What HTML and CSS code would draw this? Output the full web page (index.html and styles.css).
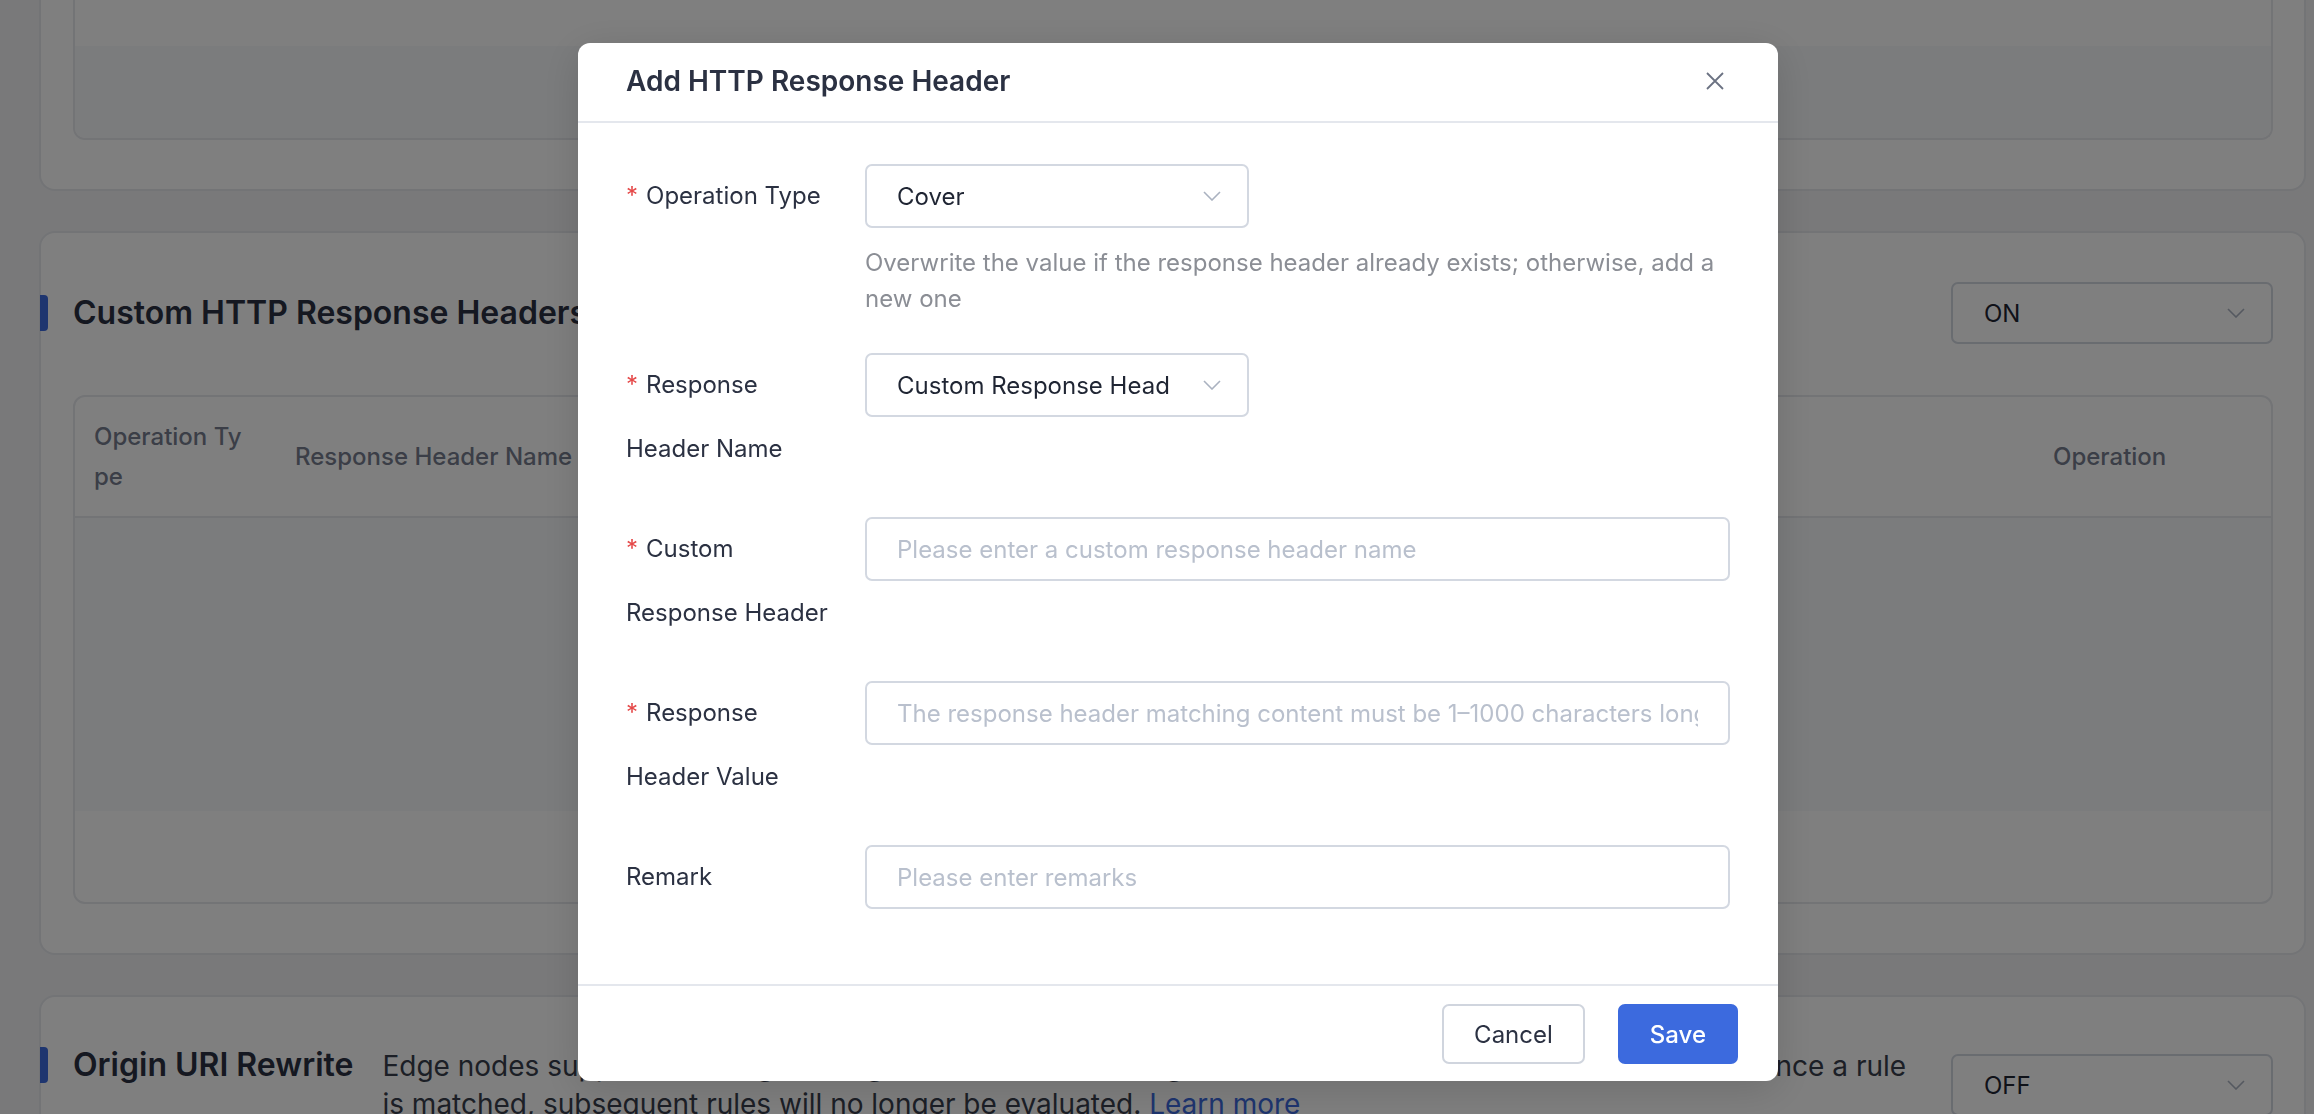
FILE: index.html
```html
<!DOCTYPE html>
<html lang="en">
<head>
<meta charset="utf-8">
<title>Response Header Settings</title>
<link rel="stylesheet" href="styles.css">
</head>
<body>
<main class="page">
  <!-- previous section, scrolled partly out of view -->
  <section class="card card-prev">
    <div class="table-box table-box-cut">
      <div class="prev-row"></div>
      <div class="empty-zone prev-empty"></div>
    </div>
  </section>

  <section class="card">
    <div class="card-head">
      <h2 class="card-title">Custom HTTP Response Headers</h2>
      <div class="select select-wide">
        <span class="select-value">ON</span>
        <svg class="select-arrow" viewBox="0 0 18 10" aria-hidden="true"><polyline points="1,1 9,9 17,1"/></svg>
      </div>
    </div>
    <div class="table-box">
      <div class="thead">
        <div class="th th-type">Operation Type</div>
        <div class="th">Response Header Name</div>
        <div class="th">Response Header Value</div>
        <div class="th">Remark</div>
        <div class="th">Operation</div>
      </div>
      <div class="empty-zone"></div>
      <div class="tfoot"></div>
    </div>
  </section>

  <section class="card">
    <div class="card-head card-head-top">
      <h2 class="card-title">Origin URI Rewrite</h2>
      <p class="card-desc">Edge nodes support rewriting the origin URI based on configured rules. Rules are matched in order, and once a rule is matched, subsequent rules will no longer be evaluated. <a class="link" href="#">Learn more</a></p>
      <div class="select select-wide select-offset">
        <span class="select-value">OFF</span>
        <svg class="select-arrow" viewBox="0 0 18 10" aria-hidden="true"><polyline points="1,1 9,9 17,1"/></svg>
      </div>
    </div>
  </section>
</main>

<div class="mask">
  <div class="dialog" role="dialog" aria-labelledby="dlg-title">
    <header class="dialog-head">
      <h3 class="dialog-title" id="dlg-title">Add HTTP Response Header</h3>
      <button class="dialog-close" type="button" aria-label="Close">
        <svg viewBox="0 0 18 18" aria-hidden="true"><path d="M1 1L17 17M17 1L1 17"/></svg>
      </button>
    </header>

    <form class="dialog-body">
      <div class="form-row">
        <label class="form-label"><span class="req">*</span>Operation Type</label>
        <div class="form-control">
          <div class="select select-narrow">
            <span class="select-value">Cover</span>
            <svg class="select-arrow" viewBox="0 0 18 10" aria-hidden="true"><polyline points="1,1 9,9 17,1"/></svg>
          </div>
          <p class="form-help">Overwrite the value if the response header already exists; otherwise, add a new one</p>
        </div>
      </div>

      <div class="form-row">
        <label class="form-label"><span class="req">*</span>Response Header Name</label>
        <div class="form-control">
          <div class="select select-narrow">
            <span class="select-value">Custom Response Header</span>
            <svg class="select-arrow select-arrow-tight" viewBox="0 0 18 10" aria-hidden="true"><polyline points="1,1 9,9 17,1"/></svg>
          </div>
        </div>
      </div>

      <div class="form-row">
        <label class="form-label"><span class="req">*</span>Custom Response Header</label>
        <div class="form-control">
          <input class="input" type="text" placeholder="Please enter a custom response header name">
        </div>
      </div>

      <div class="form-row">
        <label class="form-label"><span class="req">*</span>Response Header Value</label>
        <div class="form-control">
          <input class="input" type="text" placeholder="The response header matching content must be 1–1000 characters long">
        </div>
      </div>

      <div class="form-row">
        <label class="form-label">Remark</label>
        <div class="form-control">
          <input class="input" type="text" placeholder="Please enter remarks">
        </div>
      </div>
    </form>

    <footer class="dialog-foot">
      <button class="btn" type="button">Cancel</button>
      <button class="btn btn-primary" type="button">Save</button>
    </footer>
  </div>
</div>
</body>
</html>
```

FILE: styles.css
```css
* {
  box-sizing: border-box;
}

html,
body {
  margin: 0;
  height: 100%;
  overflow: hidden;
}

body {
  background: #f2f3f5;
  font-family: Inter, "Noto Sans", "Liberation Sans", sans-serif;
  color: #2b3142;
}

/* ---------- page behind the dialog ---------- */

.page {
  display: flex;
  flex-direction: column;
  gap: 40px;
  padding: 0 8px 0 39px;
}

.card {
  background: #fff;
  border: 2px solid #e6e8ed;
  border-radius: 16px;
  padding: 48px 31px 49px 32px;
}

.card-prev {
  border-top: 0;
  border-top-left-radius: 0;
  border-top-right-radius: 0;
  padding-top: 0;
  padding-bottom: 49px;
}

.card-head {
  display: flex;
  align-items: center;
  justify-content: space-between;
  height: 64px;
  margin-bottom: 50px;
}

.card-head-top {
  align-items: flex-start;
  height: auto;
  margin-bottom: 0;
}

.card-title {
  display: flex;
  align-items: center;
  flex: none;
  margin: 0;
  font-size: 32px;
  line-height: 40px;
  font-weight: 600;
  color: #2b3142;
  white-space: nowrap;
}

.card-title::before {
  content: "";
  width: 8px;
  height: 36px;
  margin-left: -33px;
  margin-right: 25px;
  border-radius: 0 4px 4px 0;
  background: #3c6ade;
}

.card-desc {
  flex: 1;
  margin: 0 32px 0 29px;
  padding-top: 2px;
  font-size: 28px;
  line-height: 38px;
  color: #383e4d;
}

.link {
  color: #3c6ade;
  text-decoration: none;
}

.table-box {
  border: 2px solid #e6e8ed;
  border-radius: 12px;
  overflow: hidden;
  background: #fff;
}

.table-box-cut {
  border-top: 0;
  border-top-left-radius: 0;
  border-top-right-radius: 0;
}

.prev-row {
  height: 46px;
}

.empty-zone {
  height: 293px;
  background: #f7f8fa;
}

.prev-empty {
  height: 92px;
}

.tfoot {
  height: 91px;
}

.thead {
  display: grid;
  grid-template-columns: 200px 1fr 1fr 1fr 238px;
  align-items: center;
  height: 121px;
  border-bottom: 2px solid #e6e8ed;
  font-size: 24px;
  line-height: 40px;
  font-weight: 500;
  color: #767d8e;
}

.th {
  padding: 0 20px;
  white-space: nowrap;
}

.th-type {
  padding: 0 26px 0 19px;
  white-space: normal;
  word-break: break-all;
}

/* ---------- select / input controls ---------- */

.select {
  display: flex;
  align-items: center;
  height: 64px;
  border: 2px solid #d3d8e1;
  border-radius: 7px;
  background: #fff;
  padding: 0 26px 0 30px;
  font-size: 24px;
  color: #1f2533;
}

.select-value {
  flex: 1;
  min-width: 0;
  overflow: hidden;
  white-space: nowrap;
}

.select-arrow {
  flex: none;
  width: 18px;
  height: 10px;
  margin-left: 37px;
  fill: none;
  stroke: #aab2c0;
  stroke-width: 1.6;
}

.select-arrow-tight {
  margin-left: 33px;
}

.select-narrow {
  width: 384px;
}

.select-wide {
  flex: none;
  width: 322px;
  height: 62px;
  padding-left: 31px;
}

.select-offset {
  margin-top: 9px;
}

.input {
  display: block;
  width: 100%;
  height: 64px;
  border: 2px solid #d3d8e1;
  border-radius: 7px;
  background: #fff;
  padding: 0 30px;
  font-family: inherit;
  font-size: 24px;
  color: #1f2533;
  outline: none;
}

.input::placeholder {
  color: #b9c0cd;
  opacity: 1;
}

/* ---------- modal ---------- */

.mask {
  position: fixed;
  inset: 0;
  display: flex;
  justify-content: center;
  align-items: flex-start;
  padding: 43px 0 0 42px;
  background: rgba(0, 0, 0, 0.5);
}

.dialog {
  width: 1200px;
  background: #fff;
  border-radius: 12px;
  box-shadow: 0 8px 40px rgba(0, 0, 0, 0.14);
}

.dialog-head {
  display: flex;
  align-items: center;
  justify-content: space-between;
  height: 80px;
  padding: 0 48px 2px;
  border-bottom: 2px solid #e4e7ed;
}

.dialog-title {
  margin: 0;
  font-size: 28px;
  line-height: 40px;
  font-weight: 600;
  color: #2b3142;
}

.dialog-close {
  display: grid;
  place-items: center;
  width: 30px;
  height: 30px;
  padding: 0;
  border: 0;
  background: none;
  cursor: pointer;
}

.dialog-close svg {
  width: 18px;
  height: 18px;
  fill: none;
  stroke: #6b7282;
  stroke-width: 1.8;
}

.dialog-body {
  display: flex;
  flex-direction: column;
  gap: 36px;
  margin: 0;
  padding: 41px 48px 75px;
}

.form-row {
  display: grid;
  grid-template-columns: 208px 1fr;
  column-gap: 31px;
  align-items: start;
}

.form-label {
  font-size: 24px;
  line-height: 64px;
  color: #2b3142;
}

.req {
  margin-right: 8px;
  color: #e54848;
}

.form-help {
  margin: 17px 0 0;
  font-size: 24px;
  line-height: 36px;
  color: #8b8e95;
}

.dialog-foot {
  display: flex;
  justify-content: flex-end;
  gap: 33px;
  padding: 18px 40px 17px;
  border-top: 2px solid #e4e7ed;
}

.btn {
  height: 60px;
  padding: 0 30px;
  border: 2px solid #d0d5de;
  border-radius: 7px;
  background: #fff;
  font-family: inherit;
  font-size: 24px;
  color: #2b3142;
  cursor: pointer;
}

.btn-primary {
  border-color: #3c6ade;
  background: #3c6ade;
  color: #fff;
  font-weight: 500;
}
```
